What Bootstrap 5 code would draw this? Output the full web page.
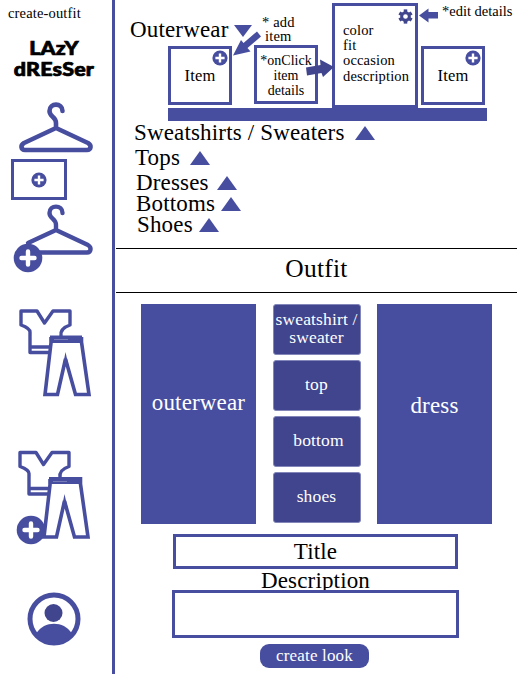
<!DOCTYPE html>
<html lang="en">
<head>
<meta charset="utf-8">
<meta name="viewport" content="width=device-width, initial-scale=1">
<title>Lazy Dresser</title>
<link href="https://cdn.jsdelivr.net/npm/bootstrap@5.3.0/dist/css/bootstrap.min.css" rel="stylesheet">
<style>
:root{--ink:#484e9f;--ink-dark:#40458d}
body{font-family:Georgia,"Liberation Serif",serif;color:#000;background:#fff;letter-spacing:.01em;width:522px;height:674px;overflow:hidden}
svg{display:block;fill:var(--ink)}
.line-art{fill:none;stroke:var(--ink);stroke-linejoin:round;stroke-linecap:round}
.side{width:115px;height:674px;border-right:3px solid var(--ink)}
.page-name{font-size:14.5px;line-height:18px;padding:4px 0 0 8px}
.brand-name{font-family:Lato,sans-serif;font-weight:900;font-size:18px;line-height:21px;padding:16px 4px 0 0;height:78px;-webkit-text-stroke:.7px #000}
.brand-name span{display:block;transform:scaleX(1.19)}
.frame{border:3px solid var(--ink);background:#fff}
.add-slot{width:56px;height:41px;margin:2px 0 0 11px}
.t-lg{font-size:23px;line-height:21px}
.t-md{font-size:16.5px;line-height:18px}
.t-sm{font-size:14.5px;line-height:15px}
.closet{height:121px;position:relative}
.closet>*{grid-area:1/1}
.closet-title{padding:19px 0 0 15px}
.shelf{padding-left:53px}
.shelf-bar{height:13px;width:319px;background:var(--ink)}
.item-box{width:64px;height:59px;margin-bottom:3px}
.item-box svg{position:absolute;top:1px;right:1px}
.detail-box{width:86px;height:105px;padding:17px 0 0 8px;line-height:15.2px}
.click-box{margin:0 14px 4px 22px;padding-top:5px;white-space:nowrap;font-size:14px;letter-spacing:0}
.note{position:absolute}
.categories{height:127px;padding-top:1px}
.categories>div{height:21px}
.outfit-head{height:45px;border-top:1px solid #000;border-bottom:1px solid #000;margin:0 5px 0 1px;font-size:25.5px;padding-top:1px;letter-spacing:.01em}
.outfit-grid{margin:11px 30px 0 26px;height:220px}
.tall{width:115px;background:var(--ink);color:#fff}
.slots{padding-bottom:1px}
.slot{height:51px;width:88px;background:var(--ink-dark);color:#fff;border:1px solid #8286b8;border-radius:3px;font-size:17.5px;line-height:18px;white-space:nowrap}
.title-box{width:285px;height:35px;margin:10px 0 0 58px}
.desc-label{height:21px;width:287px;margin-left:57px;padding-top:1px}
.desc-box{width:287px;height:48px;margin-left:57px;position:relative}
.btn-look{width:109px;height:24px;margin:6px 0 0 145px;border-radius:9px;background:var(--ink);color:#fff;font-size:17px;line-height:22px;letter-spacing:.01em}
.btn-look:hover{background:var(--ink-dark);color:#fff}
</style>
<script src="https://cdn.jsdelivr.net/npm/bootstrap@5.3.0/dist/js/bootstrap.bundle.min.js"></script>
</head>
<body>
<svg width="0" height="0" class="position-absolute">
  <defs>
    <symbol id="plus" viewBox="0 0 16 16"><circle cx="8" cy="8" r="7.6"/><path d="M8 3.4v9.2M3.4 8h9.2" stroke="#fff" stroke-width="2.4" fill="none"/></symbol>
    <symbol id="up" viewBox="0 0 20 14"><path d="M10 0L20 14H0z"/></symbol>
    <g id="clothes">
      <path d="M21 311H37L44.5 323L53 311H70V325C64 327 60 330 61 336M21 311V325C27 327 30 330 30 332V352.500M30 347H51M30 352.500H51" stroke-width="3.400"/>
    </g>
  </defs>
</svg>
<div class="d-flex">
  <aside class="side flex-shrink-0">
    <div class="page-name">create-outfit</div>
    <div class="brand-name text-center"><span>LAzY</span><span>dREsSer</span></div>
    <svg width="112" height="57" viewBox="0 100 112 57"><path class="line-art" stroke-width="4.600" d="M62.500 111C62.500 102.500 49.500 102.500 49.500 111C49.500 117 56 116.500 56 123V128L24 143C20 145.500 21 150 25 150H87C91 150 92 145.500 88 143L56 128"/></svg>
    <div class="frame add-slot d-flex align-items-center justify-content-center"><svg width="16" height="16"><use href="#plus"/></svg></div>
    <svg width="112" height="90" viewBox="0 200 112 90"><path class="line-art" stroke-width="4.400" d="M62.500 213C62.500 204.500 49.500 204.500 49.500 213C49.500 219 56 218.500 56 225V230L28 243M56 230L88 245C92 247.500 91 252.500 87 252.500H40"/><circle cx="28" cy="258" r="14.300"/><path d="M28 251.500v13M21.500 258h13" stroke="#fff" stroke-width="4.400" stroke-linecap="round"/></svg>
    <svg width="112" height="110" viewBox="0 290 112 110"><use href="#clothes" class="line-art"/><path d="M51 337V343L45 394.500H57.500L65.500 359L75.500 394.500H89L81.500 342V337" fill="#fff" stroke="var(--ink)" stroke-width="3.600"/><path d="M50 335.500H82V343H50z"/><path d="M65.500 352L62 370L65.500 362L69.500 370z"/><path d="M54 339.500h14" stroke="#8488c0" stroke-width=".8"/></svg>
    <svg width="112" height="150" viewBox="0 400 112 150"><use href="#clothes" class="line-art" transform="translate(-1 141.500)"/><path d="M50 479V485L44 537H56.500L64.500 501L74.500 537H88L80.500 484V477" fill="#fff" stroke="var(--ink)" stroke-width="3.600"/><path d="M49 477H80V484H49z"/><path d="M64.500 494L61 512L64.500 504L68.500 512z"/><path d="M53 481.500h14" stroke="#8488c0" stroke-width=".8"/><circle cx="31" cy="530" r="14.300"/><path d="M31 523.500v13M24.500 530h13" stroke="#fff" stroke-width="4.400" stroke-linecap="round"/></svg>
    <svg width="112" height="124" viewBox="0 550 112 124"><circle cx="54" cy="619" r="24" fill="#fff" stroke="var(--ink)" stroke-width="5"/><circle cx="53.500" cy="613" r="9" fill="var(--ink-dark)"/><path d="M36.500 633C44 620.500 64 620.500 71.500 633C63 647 45 647 36.500 633z"/></svg>
  </aside>
  <main class="flex-grow-1">
    <section class="closet d-grid">
      <div class="closet-title t-lg d-flex">Outerwear<svg style="margin:6px 0 0 5px" width="18" height="12" viewBox="0 0 18 12"><path d="M0 0H18L9 12z"/></svg></div>
      <div class="shelf align-self-end">
        <div class="d-flex align-items-end">
          <div class="frame item-box t-md position-relative d-flex align-items-center justify-content-center">Item<svg width="16" height="16"><use href="#plus"/></svg></div>
          <div class="frame item-box click-box t-sm text-center"><span>*onClick</span><br>item<br>details</div>
          <div class="frame detail-box t-sm position-relative">color<br>fit<br>occasion<br>description
            <svg class="position-absolute" style="top:3px;right:2px" width="15" height="15" viewBox="-8 -8 16 16"><circle r="4.100" fill="none" stroke="var(--ink-dark)" stroke-width="3.200"/><g fill="none" stroke="var(--ink-dark)" stroke-width="3.800"><path id="tooth" d="M0-4.800V-7.600"/><use href="#tooth" transform="rotate(60)"/><use href="#tooth" transform="rotate(120)"/><use href="#tooth" transform="rotate(180)"/><use href="#tooth" transform="rotate(240)"/><use href="#tooth" transform="rotate(300)"/></g></svg>
          </div>
          <div class="frame item-box t-md position-relative d-flex align-items-center justify-content-center" style="margin-left:3px">Item<svg width="16" height="16"><use href="#plus"/></svg></div>
        </div>
        <div class="shelf-bar"></div>
      </div>
      <div class="note t-sm" style="left:147px;top:15px">* add</div>
      <div class="note t-sm" style="left:150px;top:29px">item</div>
      <div class="note t-sm" style="left:327px;top:4px;letter-spacing:0">*edit details</div>
      <svg class="note" style="left:0;top:0" width="407" height="121" viewBox="115 0 407 121"><path d="M233 55.500L241 40L243.500 43L257 31.500L261 36.500L247.500 48L250.500 51.500z"/><path d="M306 67.500L320.500 65L320 59.500L334 67L323 77L321.500 73L307 75.500z" fill="var(--ink-dark)"/><path d="M419 15.500L428.500 8.500V12H438V18.500H428.500V22.500z"/></svg>
    </section>
    <section class="categories t-lg">
      <div class="d-flex mb-1" style="padding-left:19px"><span>Sweatshirts / Sweaters</span><svg width="20" height="14" style="margin:4px 0 0 10px"><use href="#up"/></svg></div>
      <div class="d-flex mb-1" style="padding-left:20px"><span>Tops</span><svg width="20" height="14" style="margin:4px 0 0 10px"><use href="#up"/></svg></div>
      <div class="d-flex" style="padding-left:21px"><span>Dresses</span><svg width="20" height="14" style="margin:4px 0 0 8px"><use href="#up"/></svg></div>
      <div class="d-flex" style="padding-left:21px"><span>Bottoms</span><svg width="20" height="14" style="margin:4px 0 0 6px"><use href="#up"/></svg></div>
      <div class="d-flex" style="padding-left:22px"><span>Shoes</span><svg width="20" height="14" style="margin:4px 0 0 6px"><use href="#up"/></svg></div>
    </section>
    <div class="outfit-head text-center">Outfit</div>
    <section class="outfit-grid d-flex justify-content-between">
      <div class="tall t-lg text-center" style="padding-top:88px">outerwear</div>
      <div class="slots d-flex flex-column justify-content-between text-center">
        <div class="slot" style="padding-top:5px">sweatshirt /<br>sweater</div>
        <div class="slot" style="padding-top:14px">top</div>
        <div class="slot ps-1" style="padding-top:14px">bottom</div>
        <div class="slot" style="padding-top:14px">shoes</div>
      </div>
      <div class="tall t-lg text-center" style="padding-top:91px">dress</div>
    </section>
    <div class="frame title-box t-lg text-center pt-1">Title</div>
    <div class="desc-label t-lg text-center">Description</div>
    <div class="frame desc-box"></div>
    <button type="button" class="btn btn-look border-0 p-0 d-block">create look</button>
  </main>
</div>
</body>
</html>
